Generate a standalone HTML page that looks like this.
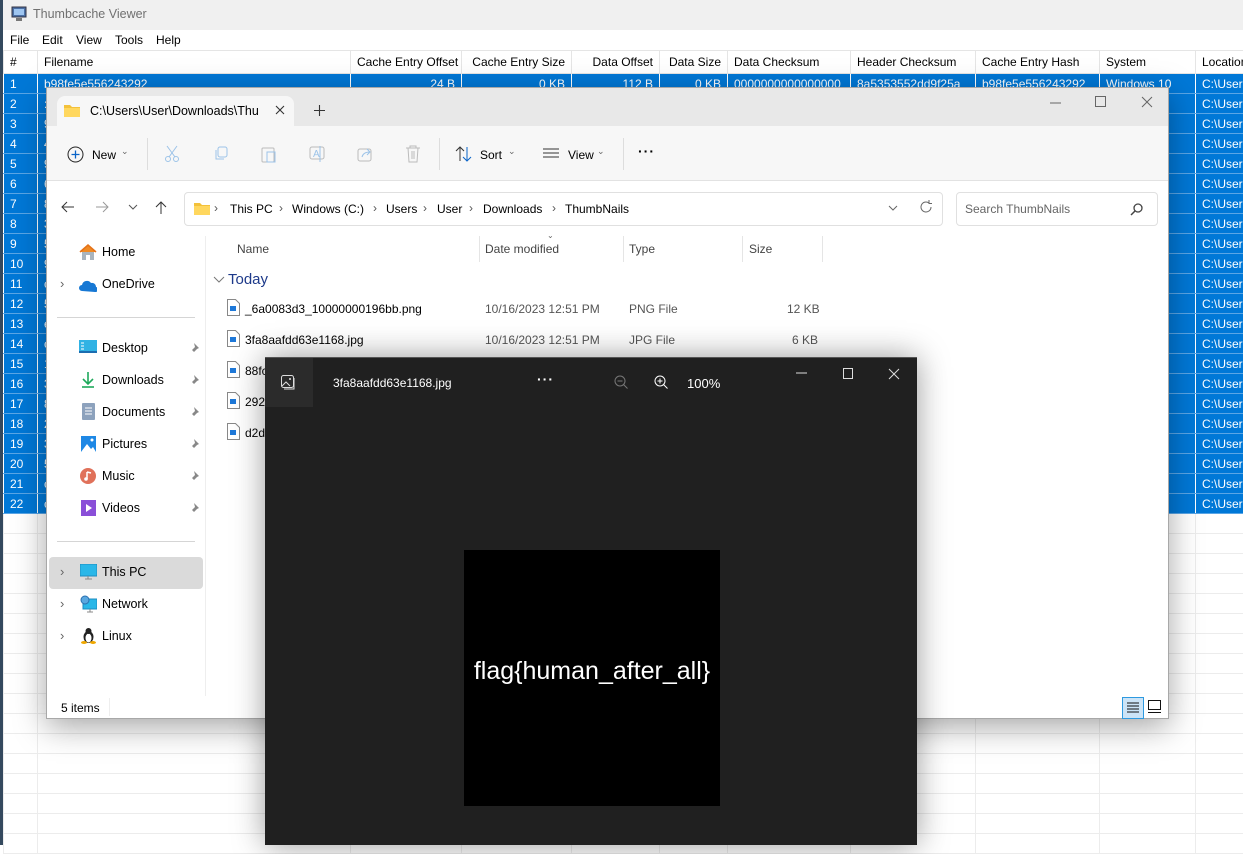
<!DOCTYPE html>
<html><head><meta charset="utf-8">
<style>
*{box-sizing:border-box;margin:0;padding:0}
body{width:1243px;height:845px;overflow:hidden;background:#fff;font-family:"Liberation Sans",sans-serif;font-size:12px;color:#000;position:relative}
.a{position:absolute;white-space:nowrap}
table{position:absolute;left:3px;top:50px;border-collapse:collapse;table-layout:fixed;width:1300px}
td{height:20px;border:1px solid #ececec;padding:0 6px;font-size:12px;overflow:hidden;white-space:nowrap;line-height:18px}
tr.h td{height:23px;border-color:#e5e5e5;background:#fff}
tr.s td{background:#0078d7;color:#fff;border-color:#fff;border-top-color:#5aa6e6;border-bottom-color:#5aa6e6}
td.r{text-align:right}
.ex{position:absolute;left:46px;top:87px;width:1123px;height:632px;background:#fff;border:1px solid #a8a8a8;box-shadow:0 8px 30px rgba(0,0,0,.35)}
.ex .a{font-size:12px}
.pv{position:absolute;left:265px;top:357px;width:652px;height:488px;background:#202020;border-top:1px solid #555;box-shadow:0 0 30px rgba(0,0,0,.4)}
.gray{color:#666}
svg{position:absolute}
</style></head><body>
<div class="a" style="left:0;top:0;width:3px;height:845px;background:#34495e"></div>
<div class="a" style="left:3px;top:0;width:1240px;height:30px;background:#f0f0f0"></div>
<svg style="left:11px;top:6px" width="16" height="16"><rect x="1" y="1" width="14" height="10" fill="#4a6fa5" stroke="#334"/><rect x="3" y="3" width="10" height="6" fill="#9ec5f0"/><rect x="5" y="12" width="6" height="3" fill="#777"/></svg>
<div class="a" style="left:33px;top:7px;font-size:12.5px;color:#707070">Thumbcache Viewer</div>
<div class="a" style="left:3px;top:30px;width:1240px;height:20px;background:#fff"></div>
<div class="a" style="left:10px;top:33px;font-size:12px">File</div>
<div class="a" style="left:42px;top:33px">Edit</div>
<div class="a" style="left:76px;top:33px">View</div>
<div class="a" style="left:115px;top:33px">Tools</div>
<div class="a" style="left:156px;top:33px">Help</div>
<table>
<colgroup><col style="width:34px"><col style="width:313px"><col style="width:111px"><col style="width:110px"><col style="width:88px"><col style="width:68px"><col style="width:123px"><col style="width:125px"><col style="width:124px"><col style="width:96px"><col style="width:108px"></colgroup>
<tr class="h"><td>#</td><td>Filename</td><td class="r">Cache Entry Offset</td><td class="r">Cache Entry Size</td><td class="r">Data Offset</td><td class="r">Data Size</td><td>Data Checksum</td><td>Header Checksum</td><td>Cache Entry Hash</td><td>System</td><td>Location</td></tr>
<tr class="s"><td>1</td><td>b98fe5e556243292</td><td class="r">24 B</td><td class="r">0 KB</td><td class="r">112 B</td><td class="r">0 KB</td><td>0000000000000000</td><td>8a5353552dd9f25a</td><td>b98fe5e556243292</td><td>Windows 10</td><td>C:\Users</td></tr>
<tr class="s"><td>2</td><td>:</td><td></td><td></td><td></td><td></td><td></td><td></td><td></td><td></td><td>C:\Users</td></tr>
<tr class="s"><td>3</td><td>9</td><td></td><td></td><td></td><td></td><td></td><td></td><td></td><td></td><td>C:\Users</td></tr>
<tr class="s"><td>4</td><td>4</td><td></td><td></td><td></td><td></td><td></td><td></td><td></td><td></td><td>C:\Users</td></tr>
<tr class="s"><td>5</td><td>9</td><td></td><td></td><td></td><td></td><td></td><td></td><td></td><td></td><td>C:\Users</td></tr>
<tr class="s"><td>6</td><td>6</td><td></td><td></td><td></td><td></td><td></td><td></td><td></td><td></td><td>C:\Users</td></tr>
<tr class="s"><td>7</td><td>8</td><td></td><td></td><td></td><td></td><td></td><td></td><td></td><td></td><td>C:\Users</td></tr>
<tr class="s"><td>8</td><td>3</td><td></td><td></td><td></td><td></td><td></td><td></td><td></td><td></td><td>C:\Users</td></tr>
<tr class="s"><td>9</td><td>5</td><td></td><td></td><td></td><td></td><td></td><td></td><td></td><td></td><td>C:\Users</td></tr>
<tr class="s"><td>10</td><td>9</td><td></td><td></td><td></td><td></td><td></td><td></td><td></td><td></td><td>C:\Users</td></tr>
<tr class="s"><td>11</td><td>c</td><td></td><td></td><td></td><td></td><td></td><td></td><td></td><td></td><td>C:\Users</td></tr>
<tr class="s"><td>12</td><td>5</td><td></td><td></td><td></td><td></td><td></td><td></td><td></td><td></td><td>C:\Users</td></tr>
<tr class="s"><td>13</td><td>e</td><td></td><td></td><td></td><td></td><td></td><td></td><td></td><td></td><td>C:\Users</td></tr>
<tr class="s"><td>14</td><td>c</td><td></td><td></td><td></td><td></td><td></td><td></td><td></td><td></td><td>C:\Users</td></tr>
<tr class="s"><td>15</td><td>1</td><td></td><td></td><td></td><td></td><td></td><td></td><td></td><td></td><td>C:\Users</td></tr>
<tr class="s"><td>16</td><td>3</td><td></td><td></td><td></td><td></td><td></td><td></td><td></td><td></td><td>C:\Users</td></tr>
<tr class="s"><td>17</td><td>8</td><td></td><td></td><td></td><td></td><td></td><td></td><td></td><td></td><td>C:\Users</td></tr>
<tr class="s"><td>18</td><td>2</td><td></td><td></td><td></td><td></td><td></td><td></td><td></td><td></td><td>C:\Users</td></tr>
<tr class="s"><td>19</td><td>3</td><td></td><td></td><td></td><td></td><td></td><td></td><td></td><td></td><td>C:\Users</td></tr>
<tr class="s"><td>20</td><td>5</td><td></td><td></td><td></td><td></td><td></td><td></td><td></td><td></td><td>C:\Users</td></tr>
<tr class="s"><td>21</td><td>c</td><td></td><td></td><td></td><td></td><td></td><td></td><td></td><td></td><td>C:\Users</td></tr>
<tr class="s"><td>22</td><td>c</td><td></td><td></td><td></td><td></td><td></td><td></td><td></td><td></td><td>C:\Users</td></tr>
<tr><td></td><td></td><td></td><td></td><td></td><td></td><td></td><td></td><td></td><td></td><td></td></tr>
<tr><td></td><td></td><td></td><td></td><td></td><td></td><td></td><td></td><td></td><td></td><td></td></tr>
<tr><td></td><td></td><td></td><td></td><td></td><td></td><td></td><td></td><td></td><td></td><td></td></tr>
<tr><td></td><td></td><td></td><td></td><td></td><td></td><td></td><td></td><td></td><td></td><td></td></tr>
<tr><td></td><td></td><td></td><td></td><td></td><td></td><td></td><td></td><td></td><td></td><td></td></tr>
<tr><td></td><td></td><td></td><td></td><td></td><td></td><td></td><td></td><td></td><td></td><td></td></tr>
<tr><td></td><td></td><td></td><td></td><td></td><td></td><td></td><td></td><td></td><td></td><td></td></tr>
<tr><td></td><td></td><td></td><td></td><td></td><td></td><td></td><td></td><td></td><td></td><td></td></tr>
<tr><td></td><td></td><td></td><td></td><td></td><td></td><td></td><td></td><td></td><td></td><td></td></tr>
<tr><td></td><td></td><td></td><td></td><td></td><td></td><td></td><td></td><td></td><td></td><td></td></tr>
<tr><td></td><td></td><td></td><td></td><td></td><td></td><td></td><td></td><td></td><td></td><td></td></tr>
<tr><td></td><td></td><td></td><td></td><td></td><td></td><td></td><td></td><td></td><td></td><td></td></tr>
<tr><td></td><td></td><td></td><td></td><td></td><td></td><td></td><td></td><td></td><td></td><td></td></tr>
<tr><td></td><td></td><td></td><td></td><td></td><td></td><td></td><td></td><td></td><td></td><td></td></tr>
<tr><td></td><td></td><td></td><td></td><td></td><td></td><td></td><td></td><td></td><td></td><td></td></tr>
<tr><td></td><td></td><td></td><td></td><td></td><td></td><td></td><td></td><td></td><td></td><td></td></tr>
<tr><td></td><td></td><td></td><td></td><td></td><td></td><td></td><td></td><td></td><td></td><td></td></tr>
</table>

<!-- Explorer -->
<div class="ex">
 <div class="a" style="left:0;top:0;width:1121px;height:38px;background:#e8e8e8"></div>
 <div class="a" style="left:10px;top:8px;width:237px;height:31px;background:#f7f7f7;border-radius:8px 8px 0 0"></div>
 <svg style="left:16px;top:15px" width="18" height="15"><path d="M1 2h6l2 2h8v10H1z" fill="#f3c13a"/><path d="M1 5h16v9H1z" fill="#ffd75e"/></svg>
 <div class="a" style="left:43px;top:16px;font-size:12.5px">C:\Users\User\Downloads\Thu</div>
 <svg style="left:228px;top:17px" width="10" height="10"><path d="M1 1l8 8M9 1l-8 8" stroke="#333" stroke-width="1.1"/></svg>
 <svg style="left:267px;top:17px" width="11" height="11"><path d="M5.5 0v11M0 5.5h11" stroke="#333" stroke-width="1.1"/></svg>
 <svg style="left:1003px;top:12px" width="12" height="6"><path d="M0 3h11" stroke="#666"/></svg>
 <svg style="left:1048px;top:8px" width="12" height="12"><rect x=".5" y=".5" width="10" height="10" fill="none" stroke="#666"/></svg>
 <svg style="left:1094px;top:8px" width="12" height="12"><path d="M1 1l10 10M11 1L1 11" stroke="#666"/></svg>
 <div class="a" style="left:0;top:38px;width:1121px;height:55px;background:#f7f7f7;border-bottom:1px solid #e2e2e2"></div>
 <svg style="left:20px;top:58px" width="17" height="17"><circle cx="8.5" cy="8.5" r="7.5" fill="none" stroke="#222"/><path d="M8.5 4.5v8M4.5 8.5h8" stroke="#0a64c8" stroke-width="1.3"/></svg>
 <div class="a" style="left:45px;top:60px;font-size:12px">New</div>
 <div class="a gray" style="left:74px;top:58px;font-size:9px">⌄</div>
 <div class="a" style="left:100px;top:50px;width:1px;height:32px;background:#ddd"></div>
 <svg style="left:117px;top:57px" width="16" height="18"><path d="M3 1l8 11M13 1L5 12" stroke="#9cc3e8"/><circle cx="4" cy="14" r="2.5" fill="none" stroke="#9cc3e8"/><circle cx="12" cy="14" r="2.5" fill="none" stroke="#9cc3e8"/></svg>
 <svg style="left:166px;top:58px" width="16" height="16"><rect x="5" y="1" width="9" height="10" rx="2" fill="none" stroke="#9cc3e8"/><path d="M3 4v9h8" fill="none" stroke="#9cc3e8"/></svg>
 <svg style="left:214px;top:57px" width="16" height="18"><rect x="1" y="3" width="12" height="14" rx="1" fill="none" stroke="#bbb"/><rect x="6" y="7" width="8" height="10" fill="none" stroke="#9cc3e8"/></svg>
 <svg style="left:262px;top:57px" width="18" height="18"><rect x="1" y="2" width="14" height="12" rx="2" fill="none" stroke="#bbb"/><text x="4" y="12" font-size="10" fill="#9cc3e8" font-family="Liberation Sans">A</text><path d="M11 1v16" stroke="#9cc3e8"/></svg>
 <svg style="left:310px;top:58px" width="16" height="16"><rect x="1" y="3" width="13" height="12" rx="2" fill="none" stroke="#bbb"/><path d="M5 11c1-4 4-5 8-5M10 3l3 3-3 3" fill="none" stroke="#9cc3e8"/></svg>
 <svg style="left:358px;top:57px" width="16" height="18"><path d="M1 3h14M5 3V1h6v2M3 3l1 14h8l1-14M7 6v8M9 6v8" fill="none" stroke="#bbb"/></svg>
 <div class="a" style="left:392px;top:50px;width:1px;height:32px;background:#ddd"></div>
 <svg style="left:408px;top:58px" width="18" height="16"><path d="M5 15V1M1 5l4-4 4 4" fill="none" stroke="#333"/><path d="M12 1v14M8 11l4 4 4-4" fill="none" stroke="#0a64c8"/></svg>
 <div class="a" style="left:433px;top:60px">Sort</div>
 <div class="a gray" style="left:461px;top:58px;font-size:9px">⌄</div>
 <svg style="left:496px;top:60px" width="18" height="12"><path d="M0 1h16M0 5h16M0 9h16" stroke="#333"/></svg>
 <div class="a" style="left:521px;top:60px">View</div>
 <div class="a gray" style="left:550px;top:58px;font-size:9px">⌄</div>
 <div class="a" style="left:576px;top:50px;width:1px;height:32px;background:#ddd"></div>
 <div class="a" style="left:591px;top:55px;font-size:14px;font-weight:bold;letter-spacing:1px">···</div>
 <!-- address -->
 <svg style="left:14px;top:113px" width="14" height="12"><path d="M13 6H1M6 1L1 6l5 5" fill="none" stroke="#333"/></svg>
 <svg style="left:48px;top:113px" width="14" height="12"><path d="M1 6h12M8 1l5 5-5 5" fill="none" stroke="#999"/></svg>
 <svg style="left:81px;top:116px" width="10" height="6"><path d="M1 1l4 4 4-4" fill="none" stroke="#555"/></svg>
 <svg style="left:108px;top:113px" width="12" height="14"><path d="M6 13V1M1 6l5-5 5 5" fill="none" stroke="#333"/></svg>
 <div class="a" style="left:137px;top:104px;width:759px;height:34px;border:1px solid #e0e0e0;border-radius:4px;background:#fff"></div>
 <svg style="left:146px;top:113px" width="18" height="15"><path d="M1 2h6l2 2h8v10H1z" fill="#f3c13a"/><path d="M1 5h16v9H1z" fill="#ffd75e"/></svg>
 <div class="a" style="left:167px;top:113px;color:#555">›</div>
 <div class="a" style="left:183px;top:114px">This PC</div>
 <div class="a" style="left:232px;top:113px;color:#555">›</div>
 <div class="a" style="left:245px;top:114px">Windows (C:)</div>
 <div class="a" style="left:326px;top:113px;color:#555">›</div>
 <div class="a" style="left:339px;top:114px">Users</div>
 <div class="a" style="left:376px;top:113px;color:#555">›</div>
 <div class="a" style="left:390px;top:114px">User</div>
 <div class="a" style="left:422px;top:113px;color:#555">›</div>
 <div class="a" style="left:436px;top:114px">Downloads</div>
 <div class="a" style="left:505px;top:113px;color:#555">›</div>
 <div class="a" style="left:518px;top:114px">ThumbNails</div>
 <svg style="left:841px;top:117px" width="10" height="6"><path d="M1 1l4 4 4-4" fill="none" stroke="#666"/></svg>
 <svg style="left:872px;top:112px" width="14" height="14"><path d="M12 7a5 5 0 1 1-2-4M10 0v3.5h3" fill="none" stroke="#666"/></svg>
 <div class="a" style="left:909px;top:104px;width:202px;height:34px;border:1px solid #e0e0e0;border-radius:4px;background:#fff"></div>
 <div class="a" style="left:918px;top:114px;color:#666">Search ThumbNails</div>
 <svg style="left:1083px;top:114px" width="14" height="14"><circle cx="8" cy="6" r="4" fill="none" stroke="#444" stroke-width="1.3"/><path d="M5 9l-4 4" stroke="#444" stroke-width="1.5"/></svg>
 <!-- nav -->
 <svg style="left:32px;top:156px" width="18" height="16"><path d="M1 8L9 1l8 7" fill="#f08a24" stroke="#e57218" stroke-width="1.5"/><path d="M3 8h12v8H3z" fill="#a9b4be"/><path d="M7 11h4v5H7z" fill="#fff"/></svg>
 <div class="a" style="left:55px;top:157px;font-size:12.5px">Home</div>
 <div class="a gray" style="left:13px;top:188px;font-size:13px">›</div>
 <svg style="left:32px;top:192px" width="18" height="12"><path d="M3 11a3 3 0 0 1 0-6 5 5 0 0 1 9-2 4 4 0 0 1 5 4 2.5 2.5 0 0 1-1 5z" fill="#1778d4"/></svg>
 <div class="a" style="left:55px;top:189px;font-size:12.5px">OneDrive</div>
 <div class="a" style="left:10px;top:229px;width:138px;height:1px;background:#d5d5d5"></div>
 <svg style="left:32px;top:252px" width="18" height="14"><rect x="0" y="0" width="18" height="13" fill="#30b2e4"/><rect x="0" y="11" width="18" height="2" fill="#1c6db0"/><path d="M2 3h3M2 6h3M2 9h3" stroke="#fff"/></svg>
 <div class="a" style="left:55px;top:253px;font-size:12.5px">Desktop</div>
 <svg style="left:34px;top:283px" width="14" height="18"><path d="M7 1v11M2 8l5 5 5-5" fill="none" stroke="#1ea95b" stroke-width="1.6"/><path d="M1 16h12" stroke="#1ea95b" stroke-width="1.6"/></svg>
 <div class="a" style="left:55px;top:285px;font-size:12.5px">Downloads</div>
 <svg style="left:35px;top:315px" width="13" height="17"><rect x="0" y="0" width="13" height="17" rx="1" fill="#8da2bd"/><path d="M3 5h7M3 8h7M3 11h7" stroke="#fff"/></svg>
 <div class="a" style="left:55px;top:317px;font-size:12.5px">Documents</div>
 <svg style="left:34px;top:348px" width="15" height="16"><rect width="15" height="16" fill="#1e88e5"/><path d="M0 16l6-8 4 5 2-2 3 5z" fill="#fff"/><circle cx="11" cy="4" r="1.5" fill="#fff"/></svg>
 <div class="a" style="left:55px;top:349px;font-size:12.5px">Pictures</div>
 <svg style="left:33px;top:380px" width="16" height="16"><circle cx="8" cy="8" r="8" fill="#e0715a"/><path d="M7 4v7M7 4l4 1" stroke="#fff" stroke-width="1.5"/><circle cx="6" cy="11" r="1.8" fill="#fff"/></svg>
 <div class="a" style="left:55px;top:381px;font-size:12.5px">Music</div>
 <svg style="left:34px;top:412px" width="15" height="16"><rect width="15" height="16" fill="#8a4fd8"/><path d="M5 4l6 4-6 4z" fill="#fff"/></svg>
 <div class="a" style="left:55px;top:413px;font-size:12.5px">Videos</div>
 <svg style="left:141px;top:254px" width="12" height="12"><path d="M6 1l5 5-2 1-3 3-1-1-4 4 4-4-1-1 3-3z" fill="#888"/></svg>
 <svg style="left:141px;top:286px" width="12" height="12"><path d="M6 1l5 5-2 1-3 3-1-1-4 4 4-4-1-1 3-3z" fill="#888"/></svg>
 <svg style="left:141px;top:318px" width="12" height="12"><path d="M6 1l5 5-2 1-3 3-1-1-4 4 4-4-1-1 3-3z" fill="#888"/></svg>
 <svg style="left:141px;top:350px" width="12" height="12"><path d="M6 1l5 5-2 1-3 3-1-1-4 4 4-4-1-1 3-3z" fill="#888"/></svg>
 <svg style="left:141px;top:382px" width="12" height="12"><path d="M6 1l5 5-2 1-3 3-1-1-4 4 4-4-1-1 3-3z" fill="#888"/></svg>
 <svg style="left:141px;top:414px" width="12" height="12"><path d="M6 1l5 5-2 1-3 3-1-1-4 4 4-4-1-1 3-3z" fill="#888"/></svg>
 <div class="a" style="left:10px;top:453px;width:138px;height:1px;background:#d5d5d5"></div>
 <div class="a" style="left:2px;top:469px;width:154px;height:32px;background:#dadada;border-radius:4px"></div>
 <div class="a gray" style="left:13px;top:476px;font-size:13px">›</div>
 <svg style="left:33px;top:476px" width="17" height="16"><rect x="0" y="0" width="17" height="12" fill="#2ab7e8" stroke="#1d8cc0"/><path d="M8 12v3M5 15h7" stroke="#888"/></svg>
 <div class="a" style="left:55px;top:477px;font-size:12.5px">This PC</div>
 <div class="a gray" style="left:13px;top:508px;font-size:13px">›</div>
 <svg style="left:33px;top:507px" width="17" height="18"><rect x="3" y="4" width="14" height="10" fill="#2ab7e8" stroke="#1d8cc0"/><circle cx="5" cy="5" r="4" fill="#5aa8e0" stroke="#2a70b0"/><path d="M10 14v3M7 17h6" stroke="#888"/></svg>
 <div class="a" style="left:55px;top:509px;font-size:12.5px">Network</div>
 <div class="a gray" style="left:13px;top:540px;font-size:13px">›</div>
 <svg style="left:34px;top:539px" width="15" height="17"><ellipse cx="7.5" cy="10" rx="5" ry="6" fill="#222"/><ellipse cx="7.5" cy="11" rx="3" ry="4.5" fill="#fff"/><circle cx="7.5" cy="4" r="3" fill="#222"/><ellipse cx="3" cy="15.5" rx="3" ry="1.5" fill="#f0a800"/><ellipse cx="12" cy="15.5" rx="3" ry="1.5" fill="#f0a800"/></svg>
 <div class="a" style="left:55px;top:541px;font-size:12.5px">Linux</div>
 <div class="a" style="left:158px;top:148px;width:1px;height:460px;background:#eee"></div>
 <!-- content -->
 <div class="a" style="left:190px;top:154px;color:#444">Name</div>
 <div class="a" style="left:432px;top:148px;width:1px;height:26px;background:#e5e5e5"></div>
 <div class="a gray" style="left:500px;top:143px;font-size:8px">⌄</div>
 <div class="a" style="left:438px;top:154px;color:#444">Date modified</div>
 <div class="a" style="left:576px;top:148px;width:1px;height:26px;background:#e5e5e5"></div>
 <div class="a" style="left:582px;top:154px;color:#444">Type</div>
 <div class="a" style="left:695px;top:148px;width:1px;height:26px;background:#e5e5e5"></div>
 <div class="a" style="left:702px;top:154px;color:#444">Size</div>
 <div class="a" style="left:775px;top:148px;width:1px;height:26px;background:#e5e5e5"></div>
 <svg style="left:166px;top:188px" width="12" height="8"><path d="M1 1l5 5 5-5" fill="none" stroke="#777"/></svg>
 <div class="a" style="left:181px;top:183px;font-size:15px;color:#1e3a8a">Today</div>

 <svg style="left:180px;top:211px" width="13" height="17"><path d="M.5 .5h8l4 4v12H.5z" fill="#fff" stroke="#888"/><rect x="3" y="7" width="6" height="5" fill="#1e78d8"/></svg>
 <div class="a" style="left:198px;top:214px">_6a0083d3_10000000196bb.png</div>
 <div class="a" style="left:438px;top:214px;color:#555">10/16/2023 12:51 PM</div>
 <div class="a" style="left:582px;top:214px;color:#555">PNG File</div>
 <div class="a" style="left:740px;top:214px;color:#555">12 KB</div>
 <svg style="left:180px;top:242px" width="13" height="17"><path d="M.5 .5h8l4 4v12H.5z" fill="#fff" stroke="#888"/><rect x="3" y="7" width="6" height="5" fill="#1e78d8"/></svg>
 <div class="a" style="left:198px;top:245px">3fa8aafdd63e1168.jpg</div>
 <div class="a" style="left:438px;top:245px;color:#555">10/16/2023 12:51 PM</div>
 <div class="a" style="left:582px;top:245px;color:#555">JPG File</div>
 <div class="a" style="left:745px;top:245px;color:#555">6 KB</div>
 <svg style="left:180px;top:273px" width="13" height="17"><path d="M.5 .5h8l4 4v12H.5z" fill="#fff" stroke="#888"/><rect x="3" y="7" width="6" height="5" fill="#1e78d8"/></svg>
 <div class="a" style="left:198px;top:276px">88fc</div>
 <svg style="left:180px;top:304px" width="13" height="17"><path d="M.5 .5h8l4 4v12H.5z" fill="#fff" stroke="#888"/><rect x="3" y="7" width="6" height="5" fill="#1e78d8"/></svg>
 <div class="a" style="left:198px;top:307px">2923</div>
 <svg style="left:180px;top:335px" width="13" height="17"><path d="M.5 .5h8l4 4v12H.5z" fill="#fff" stroke="#888"/><rect x="3" y="7" width="6" height="5" fill="#1e78d8"/></svg>
 <div class="a" style="left:198px;top:338px">d2d</div>
 <div class="a" style="left:14px;top:613px">5 items</div>
 <div class="a" style="left:62px;top:610px;width:1px;height:18px;background:#eee"></div>
 <div class="a" style="left:1075px;top:609px;width:22px;height:22px;background:#cce4f7;border:1px solid #2e9ae0"></div>
 <svg style="left:1080px;top:614px" width="13" height="12"><path d="M0 1h12M0 4h12M0 7h12M0 10h12" stroke="#111"/></svg>
 <svg style="left:1101px;top:612px" width="14" height="14"><rect x=".5" y=".5" width="12" height="9" fill="none" stroke="#111"/><path d="M0 12.5h13" stroke="#111"/></svg>
</div>

<!-- Photo viewer -->
<div class="pv">
 <div class="a" style="left:0;top:0;width:48px;height:49px;background:#2b2b2b"></div>
 <svg style="left:16px;top:17px" width="15" height="15"><rect x=".5" y=".5" width="12" height="12" rx="2" fill="none" stroke="#ddd"/><path d="M1 11l4-4 4 4M3 14h10V3" fill="none" stroke="#ddd"/><circle cx="9" cy="4" r="1" fill="#ddd"/></svg>
 <div class="a" style="left:68px;top:18px;color:#fff;font-size:12px">3fa8aafdd63e1168.jpg</div>
 <div class="a" style="left:272px;top:13px;color:#fff;font-size:14px;font-weight:bold;letter-spacing:1px">···</div>
 <svg style="left:349px;top:17px" width="14" height="14"><circle cx="6" cy="6" r="5" fill="none" stroke="#777"/><path d="M3.5 6h5M9.5 9.5l4 4" stroke="#777"/></svg>
 <svg style="left:389px;top:17px" width="14" height="14"><circle cx="6" cy="6" r="5" fill="none" stroke="#fff"/><path d="M3.5 6h5M6 3.5v5M9.5 9.5l4 4" stroke="#fff"/></svg>
 <div class="a" style="left:422px;top:18px;color:#fff;font-size:13px">100%</div>
 <svg style="left:531px;top:12px" width="12" height="6"><path d="M0 3h11" stroke="#ddd"/></svg>
 <svg style="left:578px;top:10px" width="12" height="12"><rect x=".5" y=".5" width="9" height="10" fill="none" stroke="#ddd"/></svg>
 <svg style="left:623px;top:10px" width="12" height="12"><path d="M1 1l10 10M11 1L1 11" stroke="#ddd"/></svg>
 <div class="a" style="left:199px;top:192px;width:256px;height:256px;background:#000"></div>
 <div class="a" style="left:199px;top:299px;width:256px;text-align:center;color:#fff;font-size:25px">flag{human_after_all}</div>
</div>
</body></html>
